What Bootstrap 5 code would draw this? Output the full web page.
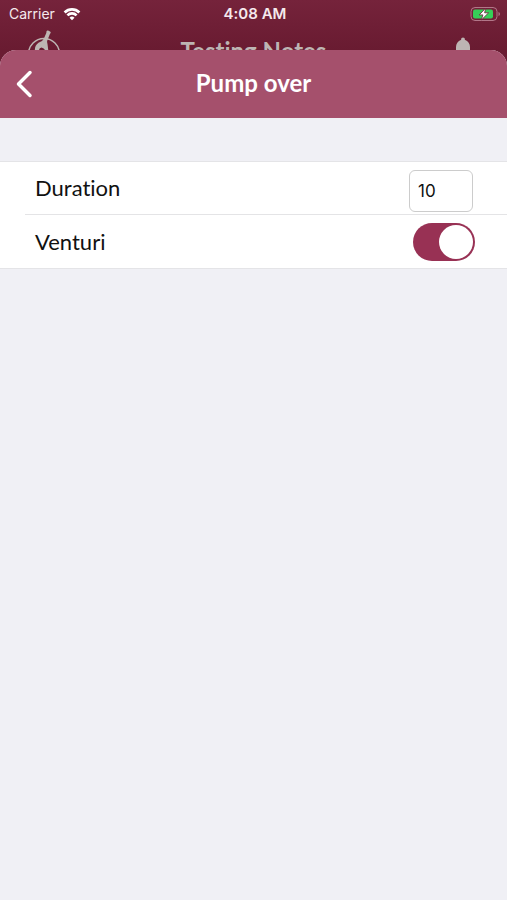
<!DOCTYPE html>
<html lang="en">
<head>
<meta charset="utf-8">
<meta name="viewport" content="width=device-width, initial-scale=1">
<title>Pump over</title>
<link href="https://cdn.jsdelivr.net/npm/bootstrap@5.3.0/dist/css/bootstrap.min.css" rel="stylesheet">
<style>
  body { font-family: Lato, sans-serif; font-variant-ligatures: none; background: #6a1c33; color: #111; }
  .backdrop-area { height: 50px; background: linear-gradient(#75233b, #691b31); }
  .status-bar { height: 28px; padding: 0 6px 0 9px; font-family: Inter, sans-serif; font-size: 14px; line-height: 28px; color: #f5e9ed; }
  .status-bar .clock { font-size: 15px; font-weight: 600; }
  .under-bar { height: 22px; padding: 0 34px 0 26px; color: #bdb5b3; }
  .under-title { font-size: 24px; line-height: 28px; font-weight: 700; padding: 9px 0 0 8px; }
  .under-bar svg { display: block; }
  .side { flex: 1 1 0; }
  .sheet { background: #f0f0f5; border-radius: 16px 16px 0 0; }
  .sheet-head { height: 68px; padding: 0 12px; background: #a5506c; color: #fff; }
  .sheet-title { font-size: 24px; line-height: 30px; font-weight: 700; padding-bottom: 2px; }
  .back-btn { line-height: 0; color: #fff; }
  .form-rows { margin-top: 43px; background: #fff; border-top: 1px solid #e4e4e7; border-bottom: 1px solid #e4e4e7; }
  .form-line { height: 53px; margin-left: 25px; padding: 0 32px 0 10px; }
  .form-line:first-child { height: 52px; }
  .form-line + .form-line { height: 54px; border-top: 1px solid #e4e4e6; }
  .form-line label { font-size: 22px; line-height: 28px; }
  .duration-box { width: 64px; height: 42px; margin: 5px 2px 0 0; padding: 0 8px; font-family: Inter, sans-serif; font-size: 17px; color: #111; border: 1px solid #ccc; border-radius: 6px; }
  .form-switch .venturi-toggle { width: 62px; height: 38px; margin: 0; border: 0; border-radius: 19px; background-color: #d8d8dc;
    background-size: 38px 38px; background-image: url("data:image/svg+xml,%3Csvg xmlns='http://www.w3.org/2000/svg' viewBox='0 0 38 38'%3E%3Ccircle cx='19' cy='19' r='17' fill='%23fff'/%3E%3C/svg%3E"); }
  .form-switch .venturi-toggle:checked { background-color: #983154; background-image: url("data:image/svg+xml,%3Csvg xmlns='http://www.w3.org/2000/svg' viewBox='0 0 38 38'%3E%3Ccircle cx='19' cy='19' r='17' fill='%23fff'/%3E%3C/svg%3E"); }
</style>
<script src="https://cdn.jsdelivr.net/npm/bootstrap@5.3.0/dist/js/bootstrap.bundle.min.js"></script>
</head>
<body class="d-flex flex-column min-vh-100">
  <div class="backdrop-area">
    <div class="status-bar d-flex align-items-center">
      <div class="side d-flex align-items-center gap-2">
        <span>Carrier</span>
        <svg width="18" height="14" viewBox="0 0 20 15" fill="none" stroke="#fff" stroke-width="3" aria-hidden="true">
          <path d="M1.8 5.8a11.6 11.6 0 0 1 16.4 0M4.9 9a7.2 7.2 0 0 1 10.2 0"/>
          <path d="M10 14.5L7.2 11.600a4 4 0 0 1 5.600 0z" fill="#fff" stroke="none"/>
        </svg>
      </div>
      <span class="clock">4:08 AM</span>
      <div class="side d-flex justify-content-end">
        <svg width="31" height="16" viewBox="0 0 31 16" aria-hidden="true">
          <rect x="1" y="1.500" width="26" height="13" rx="4" fill="none" stroke="#b27789"/>
          <rect x="3" y="3.500" width="20" height="9" rx="2" fill="#35d058"/>
          <path d="M28.500 6v4q1.500-.7 1.500-2t-1.500-2z" fill="#b27789"/>
          <path d="M15.800 2L9.200 8.900h3.700L11.300 14l7.300-7.200h-4z" fill="#fff" stroke="#6d2038" stroke-width=".8"/>
        </svg>
      </div>
    </div>
    <div class="under-bar d-flex overflow-hidden" aria-hidden="true">
      <div class="side">
        <svg width="36" height="36" viewBox="0 0 36 36">
          <circle cx="18" cy="26" r="15.500" fill="none" stroke="currentColor" stroke-width="1.500"/>
          <path d="M20.500 3.200q.5-1 1.600-.6l1.900.8q1 .5.600 1.500l-.8 1.400-2.600 6.400q-.3 1.700.3 3.300l1 8H9q-1-6 3.500-9.200 3.800-.8 5.300-4l2.500-5.900z" fill="currentColor"/>
          <path d="M13 22q.3-2.500 2.500-2.500 2.500.5 3.500 2.500z" fill="#691b31"/>
        </svg>
      </div>
      <div class="under-title">Testing Notes</div>
      <div class="side d-flex justify-content-end">
        <svg width="20" height="32" viewBox="0 0 20 32">
          <path d="M3 30V19q0-5 5.200-7.200-.5-2.300 1.800-2.300t1.800 2.300Q17 14 17 19v11z" fill="currentColor"/>
        </svg>
      </div>
    </div>
  </div>
  <main class="sheet flex-grow-1 overflow-hidden">
    <header class="sheet-head d-flex align-items-center">
      <div class="side">
        <button type="button" class="back-btn btn p-0 border-0" aria-label="Back">
          <svg width="24" height="28" viewBox="0 0 24 28" fill="none" stroke="currentColor" stroke-width="3.500" stroke-linecap="round" stroke-linejoin="round"><path d="M18 2.500L6.500 14 18 25.500"/></svg>
        </button>
      </div>
      <h1 class="sheet-title m-0">Pump over</h1>
      <div class="side"></div>
    </header>
    <form class="form-rows">
      <div class="form-line d-flex align-items-center justify-content-between">
        <label for="duration">Duration</label>
        <input id="duration" class="duration-box form-control" type="text" inputmode="numeric" value="10">
      </div>
      <div class="form-line form-switch d-flex align-items-center justify-content-between">
        <label for="venturi">Venturi</label>
        <input id="venturi" class="venturi-toggle form-check-input" type="checkbox" role="switch" checked>
      </div>
    </form>
  </main>
</body>
</html>
